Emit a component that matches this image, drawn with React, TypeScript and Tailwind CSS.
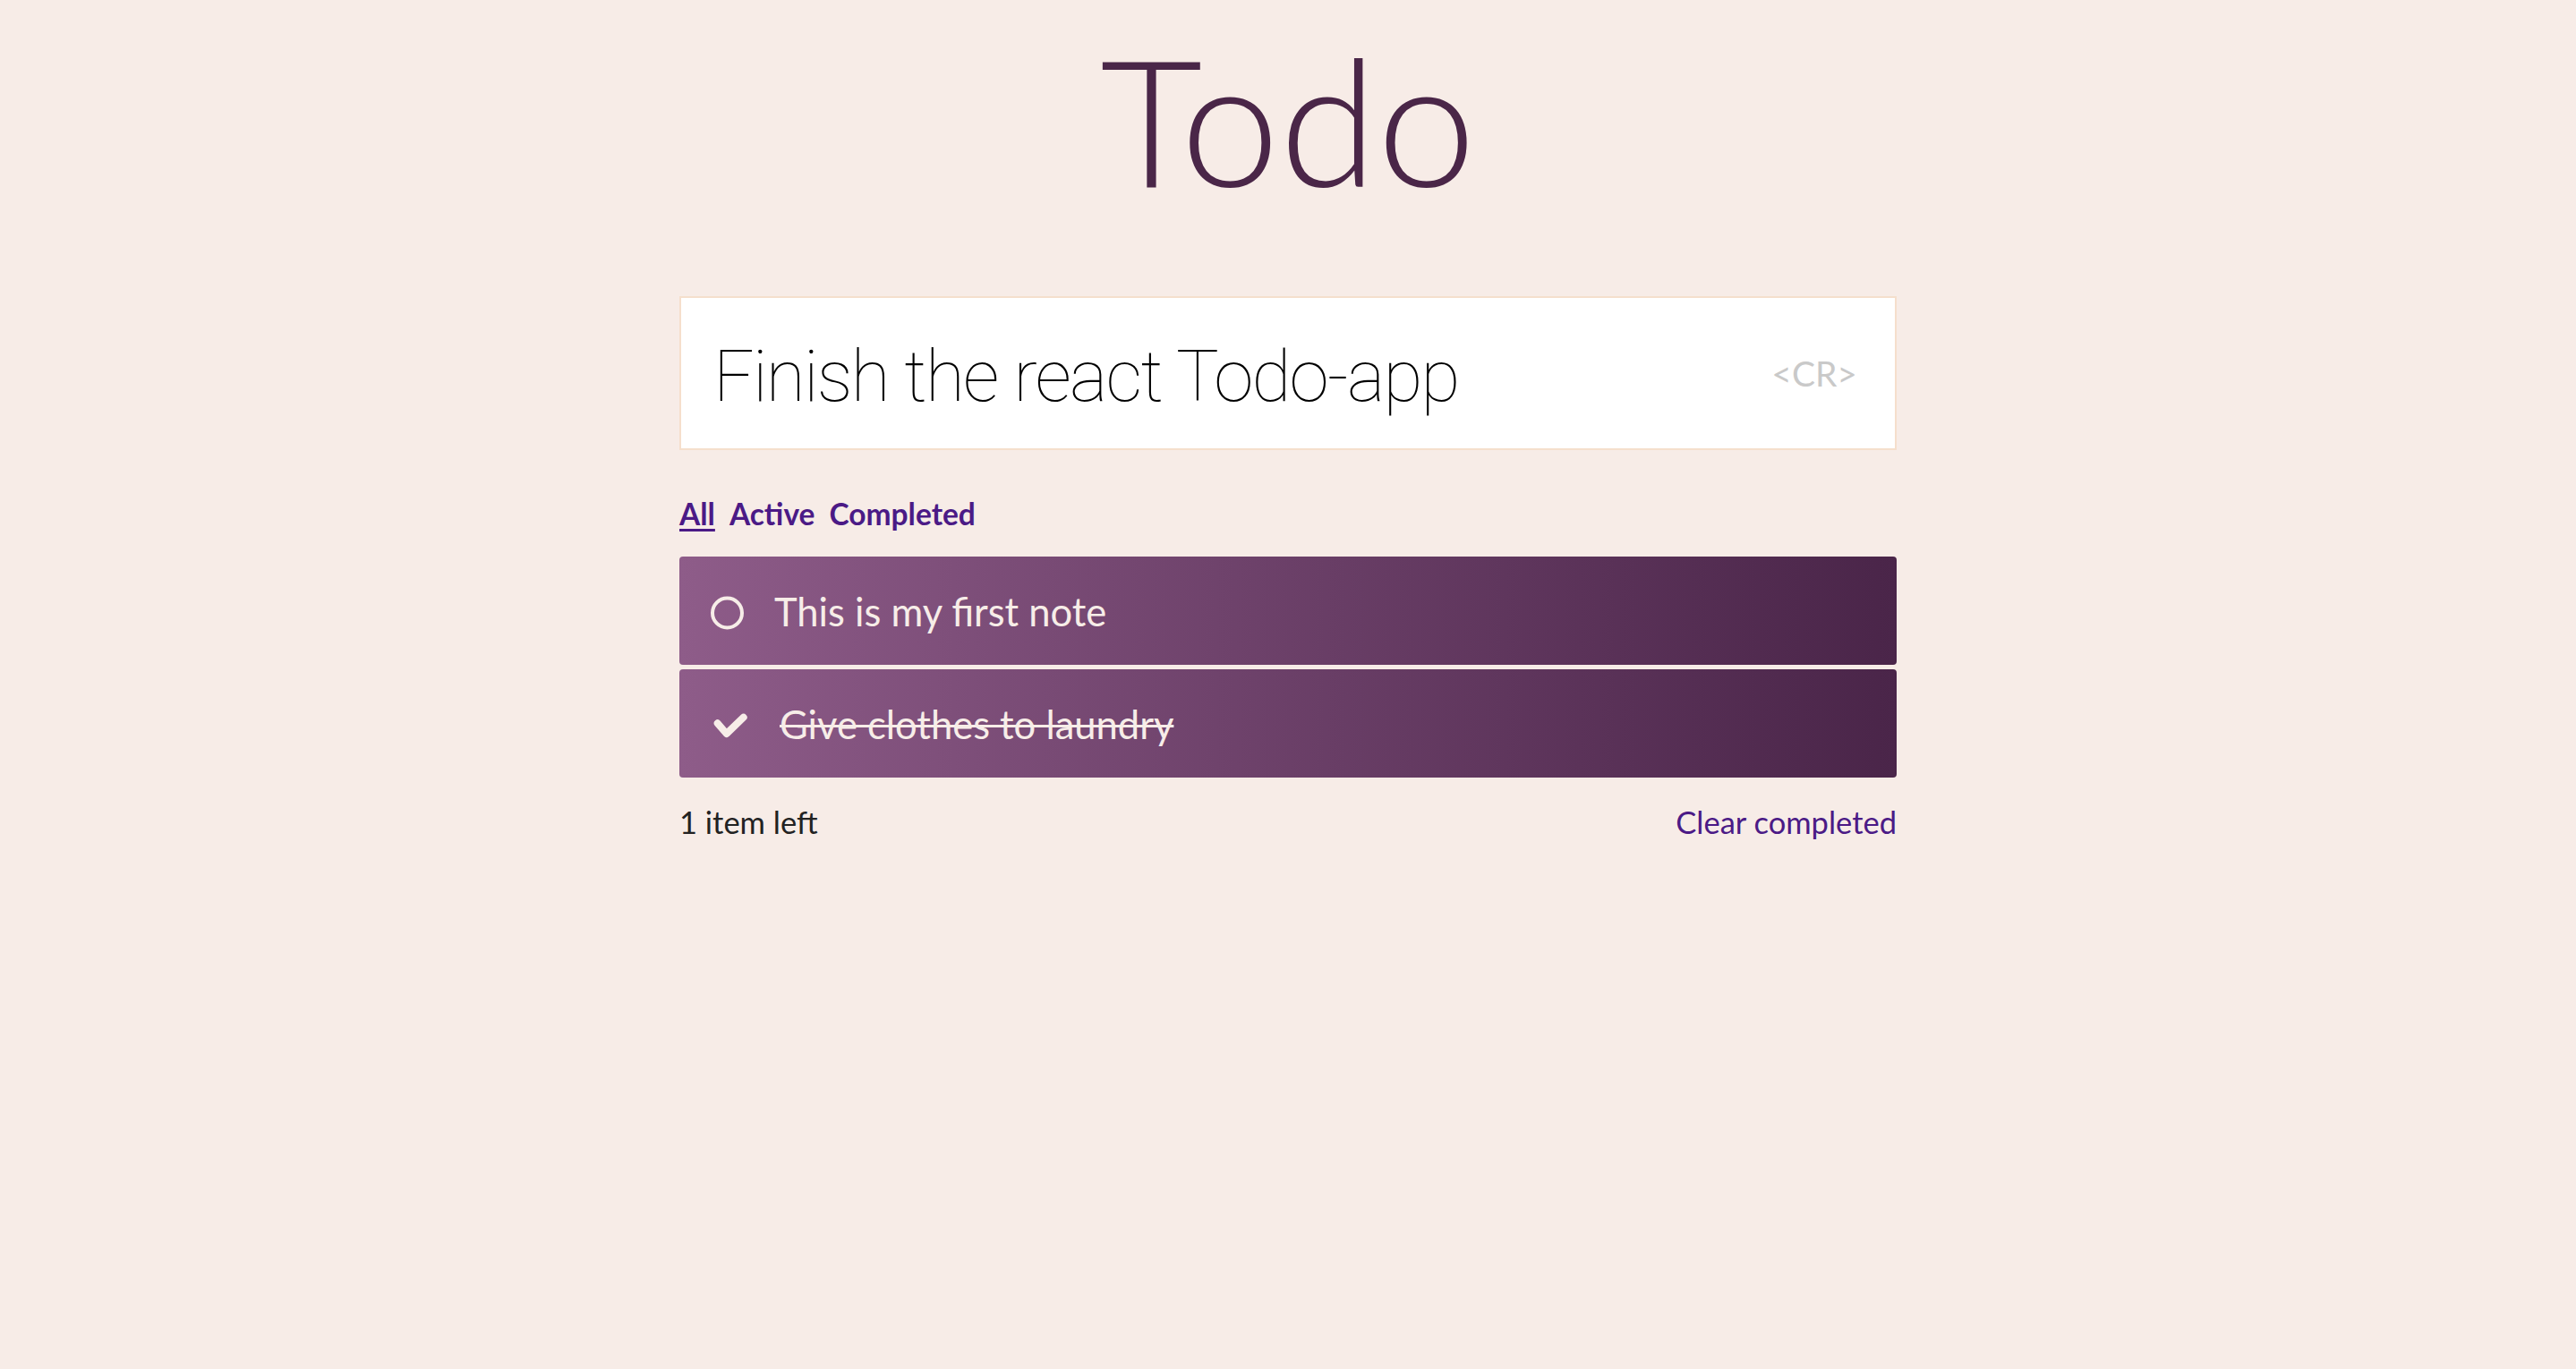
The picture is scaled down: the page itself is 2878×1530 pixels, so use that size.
import { ReactNode } from 'react'

// ── Todo row ────────────────────────────────────────────────────────────────
function TodoRow({ done, children }: { done?: boolean; children: ReactNode }) {
  return (
    <div className="h-[121px] rounded-[4px] bg-gradient-to-r from-[#8e5c89] to-[#4a2549] flex items-center pl-[34px] gap-[32px]">
      <div className={'h-[40px] mt-[5px] flex-shrink-0 ' + (done ? 'w-[46px]' : 'w-[40px]')}>
        {done ? (
          <svg width="40" height="40" viewBox="0 0 40 40" fill="none" overflow="visible">
            <polyline points="8.7,17.3 18.7,29 37.7,10.7" stroke="#f7ede8" strokeWidth="8" strokeLinecap="round" strokeLinejoin="round" />
          </svg>
        ) : (
          <svg width="40" height="40" viewBox="0 0 40 40" fill="none">
            <circle cx="19.5" cy="20" r="16.5" stroke="#f7ede8" strokeWidth="4" />
          </svg>
        )}
      </div>
      <span className={'text-[43.5px] leading-[52px] text-[#f7ede8] ' + (done ? 'line-through decoration-[3px]' : '')}>
        {children}
      </span>
    </div>
  )
}

export default function App() {
  return (
    <div className="min-h-screen bg-[#f7ece7] font-[Lato,sans-serif]">
      <div className="w-[1360px] mx-auto">
        <h1 className="pt-[34px] text-center text-[198px] leading-none font-light text-[#4a2648]">Todo</h1>

        <div className="mt-[99px] h-[172px] border-2 border-[#f5dfcc] bg-white flex items-center justify-between pl-[36px] pr-[42px]">
          <span className="mt-[8px] font-[Roboto,sans-serif] text-[80px] leading-[1.2] font-thin tracking-[-1.7px] text-black">Finish the react Todo-app</span>
          <span className="text-[39px] leading-[1.2] text-[#c9c9c9]">&lt;CR&gt;</span>
        </div>

        <div className="mt-[51px] flex gap-[16px] text-[33.5px] leading-[40px] font-bold text-[#4b1a86]">
          <a className="underline decoration-[3px] underline-offset-[4px] cursor-pointer">All</a>
          <a className="cursor-pointer">Active</a>
          <a className="cursor-pointer">Completed</a>
        </div>

        <div className="mt-[28px] flex flex-col gap-[5px]">
          <TodoRow>This is my first note</TodoRow>
          <TodoRow done>Give clothes to laundry</TodoRow>
        </div>

        <div className="mt-[29px] flex justify-between text-[34.5px] leading-[42px]">
          <span className="text-[#222]">1 item left</span>
          <a className="text-[#4b1a86] cursor-pointer">Clear completed</a>
        </div>
      </div>
    </div>
  )
}
